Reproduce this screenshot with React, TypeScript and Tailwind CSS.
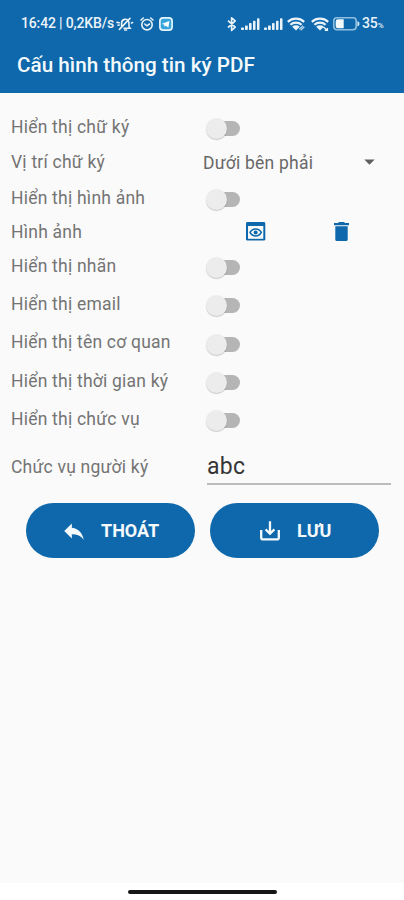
import { useState } from 'react'
import { MdArrowDropDown, MdReply } from 'react-icons/md'

interface SwitchProps {
  checked: boolean
  onChange: () => void
}

function Switch({ checked, onChange }: SwitchProps) {
  return (
    <button type="button" role="switch" aria-checked={checked} onClick={onChange}
      className={`mt-[3px] ml-[5px] flex h-[21px] w-[33px] items-center ${checked ? 'flex-row-reverse' : ''}`}>
      <span className="z-10 h-[21px] w-[21px] shrink-0 rounded-full bg-[#ececec] shadow-[0_1px_1px_rgba(0,0,0,0.2)]" />
      <span className="-ml-[15px] h-[15px] w-[28px] shrink-0 rounded-full bg-[#b5b5b5]" />
    </button>
  )
}

function MutedBell() {
  return (
    <svg viewBox="0 0 18 16" className="h-[16px] w-[18px]" fill="none" stroke="currentColor" strokeWidth="1.6" strokeLinecap="round">
      <path d="M5.6 10.6V7a3.7 3.7 0 0 1 7.2-1.2l.3 5.2 1 1.3H8M8.6 14h2M3.4 13.4 14 2.4M1 6.4l2.2.4M2 9.2l1.2-.2M16.6 6.6l-1.2.4" />
    </svg>
  )
}

function AlarmClock() {
  return (
    <svg viewBox="0 0 14 14" className="h-[14px] w-[14px]" fill="none" stroke="currentColor" strokeWidth="1.6" strokeLinecap="round" strokeLinejoin="round">
      <circle cx="7" cy="7.7" r="5.2" />
      <path d="m4.8 7 2.2 1.8L9.4 7M1 3l2.3-2M13 3l-2.3-2" />
    </svg>
  )
}

function TelegramBadge() {
  return (
    <svg viewBox="0 0 14 14" className="h-[14px] w-[14px]">
      <rect x=".9" y=".9" width="12.2" height="12.2" rx="3.2" fill="#37a5dc" stroke="#e6f4fb" strokeWidth="1.7" />
      <path d="m2.6 7.1 7.8-3.2-1 6.7-2.6-1.9-1.2 1.1-.4-2.2z" fill="#fff" />
    </svg>
  )
}

function Bluetooth() {
  return (
    <svg viewBox="0 0 17 16" className="h-[16px] w-[17px]" fill="none" stroke="currentColor" strokeWidth="1.7" strokeLinejoin="round">
      <path d="m5 4.6 7.2 6.6-3.6 3.2V1.8l3.6 3.1L5 11.6" />
    </svg>
  )
}

function Signal() {
  return (
    <svg viewBox="0 0 19 12" className="h-[12px] w-[19px]" fill="currentColor">
      <rect x="0" y="9.6" width="3" height="2.4" rx=".8" />
      <rect x="4" y="7.6" width="2.8" height="4.4" rx=".8" />
      <rect x="8" y="5" width="2.6" height="7" rx=".8" />
      <rect x="12" y="2.8" width="2.5" height="9.2" rx=".8" />
      <rect x="16" y=".2" width="2.5" height="11.8" rx=".8" />
    </svg>
  )
}

function Wifi({ linked }: { linked?: boolean }) {
  return (
    <svg viewBox="0 0 19 14" className="h-[14px] w-[19px]" fill="none" stroke="currentColor" strokeWidth="2.2">
      <path d="M.8 4.8a12.4 12.4 0 0 1 16.4 0M3.4 7.8a8.4 8.4 0 0 1 11.2 0" />
      <path d="M9 13.6 5.2 9.8a5.6 5.6 0 0 1 7.6 0z" fill="currentColor" stroke="none" />
      {linked
        ? <path d="m12.3 12.2 3.8-3.5M13.6 13.3l3.8-3.5" strokeWidth="1.3" strokeOpacity=".75" />
        : <path d="m12.4 10 3.8 3.2M16.4 11v2.3h-2.6" strokeWidth="1.4" />}
    </svg>
  )
}

function Battery() {
  return (
    <svg viewBox="0 0 27 14" className="h-[14px] w-[27px]">
      <rect x=".8" y=".8" width="22.4" height="11.9" rx="3.2" fill="none" stroke="#8fbfe0" strokeWidth="1.6" />
      <path d="M5 2.2h5.7v9H5a2.3 2.3 0 0 1-2.3-2.3V4.5A2.3 2.3 0 0 1 5 2.2z" fill="#f4f9fc" />
      <path d="M24.4 4.3c1.5.3 2 1.2 2 2.5s-.5 2.2-2 2.5z" fill="#d4e6f3" />
    </svg>
  )
}

function PreviewIcon() {
  return (
    <svg viewBox="0 0 20 20" className="h-[20px] w-[20px]">
      <rect x="0" y="0" width="19.3" height="18.6" rx="1.4" fill="#0e68ab" />
      <rect x="2" y="4" width="15.3" height="12.8" fill="#fafafa" />
      <path d="M4 10.4c1.2-2.3 3.2-3.5 5.65-3.5s4.45 1.2 5.65 3.5c-1.2 2.3-3.2 3.5-5.65 3.5S5.2 12.7 4 10.4z" fill="#fafafa" stroke="#0e68ab" strokeWidth="1.5" />
      <circle cx="9.65" cy="10.4" r="2" fill="#0e68ab" />
    </svg>
  )
}

function TrashIcon() {
  return (
    <svg viewBox="0 0 15 19" className="h-[19px] w-[15px]" fill="#0e68ab">
      <path d="M0 1h4l1-1h5l1 1h4v2.2H0zM1.3 4.2h12.4v13.2a1.6 1.6 0 0 1-1.6 1.6H2.9a1.6 1.6 0 0 1-1.6-1.6z" />
    </svg>
  )
}

function SaveIcon() {
  return (
    <svg viewBox="0 0 20 20" className="h-[20px] w-[20px]" fill="none" stroke="currentColor" strokeWidth="2.3">
      <path d="M1.2 9v7.4a2 2 0 0 0 2 2h13.6a2 2 0 0 0 2-2V9M10 .2v12.2M5.6 8.4l4.4 4.3 4.4-4.3" />
    </svg>
  )
}

const positions = ['Dưới bên phải', 'Dưới bên trái', 'Trên bên phải', 'Trên bên trái']

const rows = [
  { key: 'signature', label: 'Hiển thị chữ ký', height: 'h-[36px]' },
  { key: 'position', label: 'Vị trí chữ ký', height: 'h-[34px]' },
  { key: 'image', label: 'Hiển thị hình ảnh', height: 'h-[38px]' },
  { key: 'imageFile', label: 'Hình ảnh', height: 'h-[30px]' },
  { key: 'label', label: 'Hiển thị nhãn', height: 'h-[38px]' },
  { key: 'email', label: 'Hiển thị email', height: 'h-[38px]' },
  { key: 'org', label: 'Hiển thị tên cơ quan', height: 'h-[39px]' },
  { key: 'time', label: 'Hiển thị thời gian ký', height: 'h-[38px]' },
  { key: 'title', label: 'Hiển thị chức vụ', height: 'h-[38px]' },
]

export default function App() {
  const [values, setValues] = useState<Record<string, boolean>>({})
  const [position, setPosition] = useState(0)
  const [title, setTitle] = useState('abc')

  function renderControl(key: string) {
    if (key === 'position') {
      return (
        <button type="button" onClick={() => setPosition((position + 1) % positions.length)}
          className="mt-[3px] flex flex-1 items-center justify-between pr-[22px] pl-[2px] text-[17.5px] tracking-[0.22px] text-[#686868]">
          {positions[position]}
          <MdArrowDropDown size={25} className="-mt-[5px] text-[#606060]" />
        </button>
      )
    }
    if (key === 'imageFile') {
      return (
        <div className="flex flex-1 items-center pl-[45px]">
          <button type="button" title="Xem"><PreviewIcon /></button>
          <button type="button" title="Xóa" className="-mt-[1px] ml-[68px]"><TrashIcon /></button>
        </div>
      )
    }
    return <Switch checked={!!values[key]} onChange={() => setValues({ ...values, [key]: !values[key] })} />
  }

  return (
    <div className="flex h-[900px] w-[404px] flex-col overflow-hidden bg-white font-['Roboto','Noto_Sans',sans-serif]">
      <header className="h-[93px] shrink-0 bg-[#0e68ab] text-[#eaf3f9]">
        <div className="flex h-[47px] items-center pl-[21px] text-[14px]">
          <span className="w-[95px] font-medium tracking-[-0.15px] whitespace-nowrap">16:42 | 0,2KB/s</span>
          <MutedBell />
          <span className="ml-[6px]"><AlarmClock /></span>
          <span className="ml-[5px]"><TelegramBadge /></span>
          <div className="ml-[50px] flex items-center">
            <Bluetooth />
            <span className="ml-[1px]"><Signal /></span>
            <span className="ml-[4px]"><Signal /></span>
            <span className="ml-[4px]"><Wifi linked /></span>
            <span className="ml-[5px]"><Wifi /></span>
            <span className="ml-[3px]"><Battery /></span>
            <span className="ml-[2px] font-medium tracking-[-0.15px]">35<span className="text-[8px]">%</span></span>
          </div>
        </div>
        <h1 className="pl-[17px] text-[20.7px] leading-[36px] font-medium whitespace-nowrap text-[#f4f9fc]">Cấu hình thông tin ký PDF</h1>
      </header>

      <main className="flex h-[790px] shrink-0 flex-col bg-[#fafafa] pt-[16px] text-[17.5px] text-[#747474]">
        {rows.map(row => (
          <div key={row.key} className={`flex shrink-0 items-center pl-[11px] ${row.height}`}>
            <span className="w-[190px] shrink-0 tracking-[0.22px] whitespace-nowrap">{row.label}</span>
            {renderControl(row.key)}
          </div>
        ))}

        <div className="mt-[8px] flex h-[39px] shrink-0 items-center pl-[11px]">
          <span className="mt-[3px] w-[196px] shrink-0 tracking-[0.22px] whitespace-nowrap">Chức vụ người ký</span>
          <input value={title} onChange={e => setTitle(e.target.value)}
            className="h-[36px] w-[184px] self-end border-b-2 border-[#bcbcbc] text-[23px] tracking-[0.3px] text-[#353535] outline-none" />
        </div>

        <div className="mt-[18px] flex gap-[15px] pl-[26px] text-[18px] font-bold text-[#f4f9fc]">
          <button type="button" className="flex h-[55px] w-[169px] items-center rounded-full bg-[#0e68ab] pl-[35px]">
            <MdReply size={26} className="mr-[14px]" />THOÁT
          </button>
          <button type="button" className="flex h-[55px] w-[169px] items-center rounded-full bg-[#0e68ab] pl-[50px]">
            <span className="mr-[17px]"><SaveIcon /></span>LƯU
          </button>
        </div>
      </main>

      <div className="mx-auto mt-[7px] h-[4px] w-[149px] rounded-full bg-[#161616]" />
    </div>
  )
}
